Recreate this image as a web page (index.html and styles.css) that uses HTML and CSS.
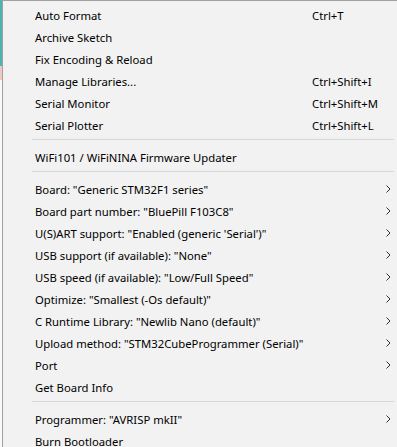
FILE: index.html
```html
<!DOCTYPE html>
<html>

<head>
	<title>Tools</title>
	<link rel="stylesheet" href="styles.css">
</head>

<body>
	<div class="screen">
		<!-- край окна IDE под меню -->
		<div class="behind"></div>

		<div class="menu">
			<div class="item"><span class="label">Auto Format</span><span class="key">Ctrl+T</span></div>
			<div class="item"><span class="label">Archive Sketch</span></div>
			<div class="item"><span class="label">Fix Encoding &amp; Reload</span></div>
			<div class="item"><span class="label">Manage Libraries...</span><span class="key">Ctrl+Shift+I</span></div>
			<div class="item"><span class="label">Serial Monitor</span><span class="key">Ctrl+Shift+M</span></div>
			<div class="item"><span class="label">Serial Plotter</span><span class="key">Ctrl+Shift+L</span></div>
			<div class="sep"></div>
			<div class="item"><span class="label">WiFi101 / WiFiNINA Firmware Updater</span></div>
			<div class="sep"></div>
			<div class="item sub"><span class="label">Board: "Generic STM32F1 series"</span><svg class="arrow" width="5" height="8" viewBox="0 0 5 8"><path d="M0.5 0.5 L4 4 L0.5 7.5" fill="none" stroke="#333" stroke-width="1"/></svg></div>
			<div class="item sub"><span class="label">Board part number: "BluePill F103C8"</span><svg class="arrow" width="5" height="8" viewBox="0 0 5 8"><path d="M0.5 0.5 L4 4 L0.5 7.5" fill="none" stroke="#333" stroke-width="1"/></svg></div>
			<div class="item sub"><span class="label">U(S)ART support: "Enabled (generic 'Serial')"</span><svg class="arrow" width="5" height="8" viewBox="0 0 5 8"><path d="M0.5 0.5 L4 4 L0.5 7.5" fill="none" stroke="#333" stroke-width="1"/></svg></div>
			<div class="item sub"><span class="label">USB support (if available): "None"</span><svg class="arrow" width="5" height="8" viewBox="0 0 5 8"><path d="M0.5 0.5 L4 4 L0.5 7.5" fill="none" stroke="#333" stroke-width="1"/></svg></div>
			<div class="item sub"><span class="label">USB speed (if available): "Low/Full Speed"</span><svg class="arrow" width="5" height="8" viewBox="0 0 5 8"><path d="M0.5 0.5 L4 4 L0.5 7.5" fill="none" stroke="#333" stroke-width="1"/></svg></div>
			<div class="item sub"><span class="label">Optimize: "Smallest (-Os default)"</span><svg class="arrow" width="5" height="8" viewBox="0 0 5 8"><path d="M0.5 0.5 L4 4 L0.5 7.5" fill="none" stroke="#333" stroke-width="1"/></svg></div>
			<div class="item sub"><span class="label">C Runtime Library: "Newlib Nano (default)"</span><svg class="arrow" width="5" height="8" viewBox="0 0 5 8"><path d="M0.5 0.5 L4 4 L0.5 7.5" fill="none" stroke="#333" stroke-width="1"/></svg></div>
			<div class="item sub"><span class="label">Upload method: "STM32CubeProgrammer (Serial)"</span><svg class="arrow" width="5" height="8" viewBox="0 0 5 8"><path d="M0.5 0.5 L4 4 L0.5 7.5" fill="none" stroke="#333" stroke-width="1"/></svg></div>
			<div class="item sub"><span class="label">Port</span><svg class="arrow" width="5" height="8" viewBox="0 0 5 8"><path d="M0.5 0.5 L4 4 L0.5 7.5" fill="none" stroke="#333" stroke-width="1"/></svg></div>
			<div class="item"><span class="label">Get Board Info</span></div>
			<div class="sep"></div>
			<div class="item sub"><span class="label">Programmer: "AVRISP mkII"</span><svg class="arrow" width="5" height="8" viewBox="0 0 5 8"><path d="M0.5 0.5 L4 4 L0.5 7.5" fill="none" stroke="#333" stroke-width="1"/></svg></div>
			<div class="item"><span class="label">Burn Bootloader</span></div>
		</div>
	</div>
</body>

</html>
```

FILE: styles.css
```css
html,
body {
	margin: 0;
	overflow: hidden;
	background-color: #f2f2f2;
}

.screen {
	display: flex;
	height: 447px;
}

/* полоска окна, которое видно слева от меню */
.behind {
	width: 2px;
	flex-shrink: 0;
	background: linear-gradient(#4fb3b3 0, #4fb3b3 66px, #f0c8c8 66px, #f0c8c8 80px, #fafafa 80px, #fafafa 100%);
}

.menu {
	flex: 1;
	min-width: 0;
	background-color: #f2f2f2;
	border-top: 1px solid #a0a0a0;
	border-left: 1px solid #a0a0a0;
	padding-top: 3px;
	font-family: "Noto Sans", "Open Sans", sans-serif;
	font-size: 11.3px;
	color: #000;
}

.item {
	display: flex;
	align-items: center;
	height: 22px;
	padding-left: 32px;
	white-space: nowrap;
}

.label {
	width: 277px;
	flex-shrink: 0;
}

.key {
	flex-shrink: 0;
}

/* стрелка подменю */
.arrow {
	margin-left: 74px;
	flex-shrink: 0;
}

.sep {
	height: 1px;
	margin: 3px 3px 6px 29px;
	background-color: #d7d7d7;
}
```
